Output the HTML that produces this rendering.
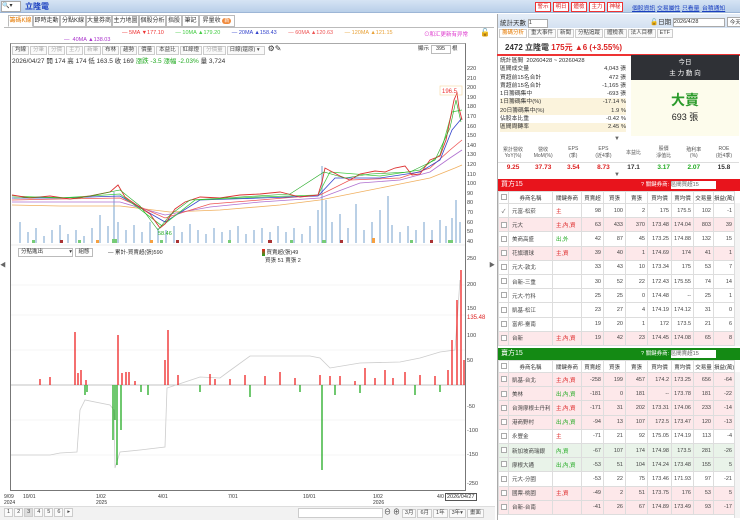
<!DOCTYPE html>
<html><head><meta charset="utf-8">
<style>
*{margin:0;padding:0;box-sizing:border-box}
body{width:740px;height:520px;overflow:hidden;background:#fff;font-family:"Liberation Sans","Noto Sans CJK TC",sans-serif;font-size:7px;color:#333;position:relative}
.abs{position:absolute}
.top{left:0;top:0;width:740px;height:13px;background:linear-gradient(#d6e4f4,#b9cfe9);border-bottom:1px solid #9db6d6}
.btnr{position:absolute;top:2px;height:10px;width:16px;border:1px solid #e33;background:#fff;color:#d22;font-size:5.5px;line-height:8px;text-align:center;white-space:nowrap;overflow:hidden}
.lnk{position:absolute;top:3px;color:#1a3fc0;text-decoration:underline;font-size:5.8px;white-space:nowrap}
.tab{position:absolute;top:15px;height:12px;border:1px solid #bbb;background:#fff;font-size:6px;line-height:10px;text-align:center;color:#333;white-space:nowrap;overflow:hidden}
.tb{display:inline-block;border:1px solid #ccc;height:9px;line-height:7px;padding:0 2px;font-size:5.5px;margin-right:1px;color:#444;background:#fafafa}
.yl{position:absolute;left:467px;font-size:5.5px;color:#444}
table{border-collapse:collapse;table-layout:fixed}
.tt td{border:1px solid #ddd;font-size:5.5px;height:14.2px;text-align:right;padding-right:2px;color:#444;white-space:nowrap;overflow:hidden}
.tt td:nth-child(2),.tt td:nth-child(3){text-align:left;padding-left:3px}
.tt td:nth-child(1){text-align:center;padding:0}
.tt tr.h td{height:12px;text-align:center;padding:0;background:#fff;color:#333}
.pk td{background:#fde8ea}
.gr td{background:#e9f3e9}
.r{color:#d22!important}.g{color:#2a2!important}
.cb{display:inline-block;width:6px;height:6px;border:1px solid #aaa;background:#fff;vertical-align:middle}
</style></head><body>

<div class="abs top"></div>
<div class="abs" style="left:1px;top:1px;width:20px;height:11px;background:#fff;border:1px solid #aaa;font-size:6px;line-height:9px">🔍▾</div>
<div class="abs" style="left:25px;top:1px;font-size:8px;font-weight:bold;color:#1a3fc0">立隆電</div>
<div class="btnr" style="left:535px">警示</div>
<div class="btnr" style="left:553px">明日</div>
<div class="btnr" style="left:571px">體檢</div>
<div class="btnr" style="left:589px">主力</div>
<div class="btnr" style="left:607px">神秘</div>
<div class="lnk" style="left:632px">個股資訊</div>
<div class="lnk" style="left:657px">交易屬性</div>
<div class="lnk" style="left:682px">只看量</div>
<div class="lnk" style="left:702px">台積通知</div>

<!-- left tabs -->
<div class="tab" style="left:8px;width:25px;color:#e67a00;border-bottom-color:#fff">籌碼K線</div>
<div class="tab" style="left:33px;width:27px">即時走動</div>
<div class="tab" style="left:60px;width:26px">分點K線</div>
<div class="tab" style="left:86px;width:26px">大量券商</div>
<div class="tab" style="left:112px;width:27px">主力地圖</div>
<div class="tab" style="left:139px;width:27px">個股分析</div>
<div class="tab" style="left:166px;width:16px">指股</div>
<div class="tab" style="left:182px;width:17px">筆記</div>
<div class="tab" style="left:199px;width:36px">昇量收 <span style="background:#f08a3c;color:#fff;border-radius:4px;padding:0 2px;font-size:5px">新</span></div>
<div class="abs" style="left:4px;top:27px;width:490px;height:1px;background:#bbb"></div>

<div class="abs" style="left:122px;top:30px;font-size:5.5px;white-space:nowrap">
<span style="color:#e33">— </span><span style="color:#e33">5MA ▼177.10</span>
<span style="color:#4c4;margin-left:10px">— </span><span style="color:#4c4">10MA ▲179.20</span>
<span style="color:#34c;margin-left:10px">— </span><span style="color:#34c">20MA ▲158.43</span>
<span style="color:#e55;margin-left:10px">— </span><span style="color:#e55">60MA ▲120.63</span>
<span style="color:#e9a33a;margin-left:10px">— 120MA ▲121.15</span></div>
<div class="abs" style="left:64px;top:37px;font-size:5.5px;color:#a3c">— &nbsp;40MA ▲138.03</div>
<div class="abs" style="left:424px;top:30px;font-size:5.5px;color:#d3c">⊙和汇更新有异常</div>
<div class="abs" style="left:480px;top:28px;font-size:8px">🔓</div>

<!-- chart frame -->
<div class="abs" style="left:10px;top:43px;width:456px;height:448px;border:1px solid #777;border-top-color:#aaa"></div>
<div class="abs" style="left:12px;top:44px;white-space:nowrap">
<span class="tb">均線</span><span class="tb" style="color:#aaa">分筆</span><span class="tb" style="color:#aaa">分價</span><span class="tb" style="color:#aaa">主力</span><span class="tb" style="color:#aaa">新筆</span><span class="tb">布林</span><span class="tb">趨勢</span><span class="tb">價量</span><span class="tb">本益比</span><span class="tb">紅綠燈</span><span class="tb" style="color:#aaa">分價量</span><span class="tb" style="width:38px">日線(還原) ▾</span>
<span style="font-size:8px">⚙✎</span></div>
<div class="abs" style="left:418px;top:44px;font-size:5.5px">顯示 <span style="display:inline-block;border:1px solid #bbb;width:20px;height:9px;text-align:center">395</span> 根</div>
<div class="abs" style="left:12px;top:55px;font-size:6.5px;white-space:nowrap">2026/04/27 開 174 高 174 低 163.5 收 169 <span class="g">漲跌 -3.5 漲幅 -2.03%</span> 量 3,724</div>

<div class="yl" style="top:66px">220</div><div class="yl" style="top:76px">210</div><div class="yl" style="top:85px">200</div><div class="yl" style="top:95px">190</div><div class="yl" style="top:104px">180</div><div class="yl" style="top:114px">170</div><div class="yl" style="top:124px">160</div><div class="yl" style="top:133px">150</div><div class="yl" style="top:143px">140</div><div class="yl" style="top:152px">130</div><div class="yl" style="top:162px">120</div><div class="yl" style="top:172px">110</div><div class="yl" style="top:181px">100</div><div class="yl" style="top:191px">90</div><div class="yl" style="top:200px">80</div><div class="yl" style="top:210px">70</div><div class="yl" style="top:220px">60</div><div class="yl" style="top:229px">50</div><div class="yl" style="top:239px">40</div>

<svg class="abs" style="left:0;top:0" width="495" height="520">
<g stroke="#a9c4e0" stroke-width="1.6">
<path d="M20 243V222M28 243V232M36 243V228M44 243V236M52 243V230M60 243V225M68 243V234M76 243V230M84 243V236M92 243V228M100 243V215M108 243V226M114 243V192M118 243V222M126 243V230M134 243V225M142 243V232M150 243V222M158 243V228M166 243V230M174 243V226M182 243V232M190 243V224M198 243V230M206 243V234M214 243V228M222 243V232M230 243V230M238 243V226M246 243V234M254 243V230M262 243V228M270 243V232M278 243V226M286 243V232M294 243V228M302 243V234M310 243V226M318 243V210M322 243V166M326 243V200M332 243V222M340 243V214M348 243V228M356 243V204M364 243V230M372 243V222M380 243V210M388 243V196M392 243V225M400 243V232M408 243V226M416 243V230M424 243V222M432 243V230M440 243V220M446 243V226M452 243V218M456 243V200M460 243V222"/></g>
<polyline fill="none" stroke="#f0b060" stroke-width="0.8" points="12,205 60,206 120,206 170,212 220,210 280,205 320,200 360,192 400,184 430,178 455,168 462,165"/>
<polyline fill="none" stroke="#b070d0" stroke-width="0.8" points="12,202 60,202 120,202 165,215 210,207 260,202 320,198 360,183 400,180 430,172 450,158 462,150"/>
<polyline fill="none" stroke="#e55" stroke-width="0.8" points="12,200 60,199 120,198 165,218 210,204 260,200 320,195 350,180 400,178 430,168 450,150 462,140"/>
<polyline fill="none" stroke="#34c" stroke-width="0.8" points="12,198 60,198 120,196 165,222 200,200 260,198 318,196 335,178 380,178 420,172 440,160 452,130 462,118"/>
<polyline fill="none" stroke="#4c4" stroke-width="0.8" points="12,196 60,198 120,194 162,226 195,200 260,197 318,195 330,172 380,176 420,170 440,155 452,112 462,110"/>
<polyline fill="none" stroke="#d33" stroke-width="0.9" points="12,195 30,198 50,196 70,199 90,196 110,192 118,185 125,197 135,204 150,214 160,228 165,224 175,209 185,202 200,197 220,198 240,195 260,194 280,192 300,197 318,195 322,182 325,168 340,176 350,180 360,174 375,171 385,172 395,168 405,166 412,175 420,174 430,160 440,156 446,140 450,120 454,100 457,93 459,108 462,120"/>
<polyline fill="none" stroke="#2a2" stroke-width="0.6" points="14,198 40,197 80,198 120,190 140,206 158,230 170,215 190,200 240,197 290,194 324,172 345,178 370,174 410,172 435,160 450,128 456,100 461,122"/>
<text x="442" y="93" font-size="6" fill="#e33">196.5</text>
<rect x="440" y="86" width="22" height="9" fill="none" stroke="#f3d7a0" stroke-width="0.6"/>
<text x="158" y="235" font-size="5.5" fill="#2a2">58.46</text>
<g fill="#7c7">
<rect x="32" y="240" width="3" height="3"/><rect x="78" y="240" width="3" height="3"/><rect x="112" y="239" width="5" height="4"/><rect x="160" y="240" width="3" height="3"/><rect x="228" y="240" width="3" height="3"/><rect x="290" y="240" width="3" height="3"/><rect x="322" y="240" width="4" height="3"/><rect x="410" y="240" width="3" height="3"/><rect x="448" y="240" width="5" height="3"/></g>
<g fill="#a33"><rect x="60" y="240" width="3" height="3"/><rect x="176" y="240" width="3" height="3"/><rect x="268" y="240" width="4" height="3"/><rect x="340" y="240" width="3" height="3"/><rect x="430" y="240" width="3" height="3"/></g>
<g fill="#f6a040"><rect x="96" y="240" width="3" height="3"/><rect x="150" y="240" width="3" height="3"/><rect x="372" y="238" width="3" height="5"/></g>
<line x1="11" y1="245" x2="465" y2="245" stroke="#ddd" stroke-width="0.6"/>
<g stroke="#eee" stroke-width="0.6"><line x1="11" y1="285" x2="465" y2="285"/><line x1="11" y1="315" x2="465" y2="315"/><line x1="11" y1="350" x2="465" y2="350"/><line x1="11" y1="420" x2="465" y2="420"/><line x1="11" y1="455" x2="465" y2="455"/></g>
<line x1="11" y1="385" x2="465" y2="385" stroke="#888" stroke-width="0.6"/>
<polyline fill="none" stroke="#ccc" stroke-width="0.8" points="11,455 50,455 60,453 77,452 80,410 85,400 110,405 114,410 115,468 120,452 140,450 165,447 167,388 200,377 220,378 228,372 250,356 310,356 320,358 330,368 360,363 400,362 420,358 440,352 455,350 460,280"/>
<g stroke="#e22" stroke-width="1.3"><path d="M40 385V379M50 385V377M75 385V332M78 385V373M81 385V370M86 385V380M118 385V335M122 385V373M126 385V372M129 385V372M135 385V381M165 385V360M168 385V330M178 385V375M210 385V374M215 385V379M230 385V379M245 385V375M265 385V376M280 385V372M295 385V378M320 385V375M330 385V376M340 385V376M355 385V381M365 385V368M375 385V378M385 385V370M393 385V378M405 385V372M420 385V375M435 385V376M448 385V370M452 385V340M457 385V300M461 385V270M464 385V360"/></g>
<g stroke="#2a2" stroke-width="1.3"><path d="M85 385V395M87 385V392M113 385V440M115 385V420M117 385V465M121 385V430M141 385V392M148 385V395M200 385V392M250 385V397M300 385V392M322 385V470M335 385V395M360 385V393M415 385V395M440 385V392"/></g>
</svg>
<div class="abs" style="left:18px;top:248px;width:55px;height:9px;border:1px solid #bbb;font-size:5.5px;line-height:7px;padding-left:2px">分點進出 <span style="float:right">▾</span></div>
<div class="abs" style="left:75px;top:248px;width:18px;height:9px;border:1px solid #bbb;font-size:5.5px;line-height:7px;text-align:center">組態</div>
<div class="abs" style="left:108px;top:248px;font-size:5.5px">— 累計-買賣超(張)590</div>
<div class="abs" style="left:262px;top:248px;font-size:5.5px"><span style="display:inline-block;width:3px;height:7px;background:linear-gradient(#e22,#2a2);vertical-align:middle"></span> 買賣超(張)49<br>&nbsp;&nbsp;買張 51 賣張 2</div>
<div class="yl" style="top:256px">250</div><div class="yl" style="top:282px">200</div><div class="yl" style="top:306px">150</div><div class="yl" style="top:315px;color:#d22;font-size:6px">135.48</div><div class="yl" style="top:333px">100</div><div class="yl" style="top:358px">50</div><div class="yl" style="top:404px">-50</div><div class="yl" style="top:428px">-100</div><div class="yl" style="top:452px">-150</div><div class="yl" style="top:481px">-250</div>
<div class="abs" style="left:0;top:260px;font-size:6px;color:#666">◀</div>
<div class="abs" style="left:489px;top:260px;font-size:6px;color:#666">▶</div>

<div class="abs" style="left:4px;top:494px;font-size:5px;line-height:6px">9/09<br>2024</div>
<div class="abs" style="left:23px;top:494px;font-size:5px">10/01</div>
<div class="abs" style="left:96px;top:494px;font-size:5px;line-height:6px">1/02<br>2025</div>
<div class="abs" style="left:158px;top:494px;font-size:5px">4/01</div>
<div class="abs" style="left:228px;top:494px;font-size:5px">7/01</div>
<div class="abs" style="left:303px;top:494px;font-size:5px">10/01</div>
<div class="abs" style="left:373px;top:494px;font-size:5px;line-height:6px">1/02<br>2026</div>
<div class="abs" style="left:437px;top:494px;font-size:5px">4/0</div>
<div class="abs" style="left:445px;top:493px;font-size:5.5px;border:1px solid #555;background:#fff;padding:0 1px">2026/04/27</div>

<div class="abs" style="left:0;top:506px;width:495px;height:14px;background:#f2f2f2;border-top:1px solid #ddd"></div>
<div class="abs" style="left:4px;top:508px;font-size:5.5px;white-space:nowrap"><span class="tb">1</span><span class="tb">2</span><span class="tb" style="background:#ddd">3</span><span class="tb">4</span><span class="tb">5</span><span class="tb">6</span><span class="tb">▸</span></div>
<div class="abs" style="left:298px;top:508px;width:85px;height:10px;border:1px solid #ccc;background:#fff"></div>
<div class="abs" style="left:384px;top:507px;font-size:7px;white-space:nowrap">⊖ ⊕ <span class="tb">3月</span><span class="tb">6月</span><span class="tb">1年</span><span class="tb">3年▾</span><span class="tb">畫面</span></div>

<!-- right panel -->
<div class="abs" style="left:497px;top:14px;width:243px;height:506px;border-left:1px solid #aaa"></div>
<div class="abs" style="left:498px;top:14px;width:242px;height:14px;background:linear-gradient(#e6eef8,#d4e1f1)"></div>
<div class="abs" style="left:500px;top:17px;font-size:6.5px">統計天數 <span style="display:inline-block;width:20px;height:9px;border:1px solid #aaa;background:#fff;font-size:5.5px;vertical-align:middle">1</span></div>
<div class="abs" style="left:650px;top:16px;font-size:6.5px;white-space:nowrap">🔓日期 <span style="display:inline-block;width:52px;height:9px;border:1px solid #aaa;background:#fff;font-size:5.5px;vertical-align:middle">2026/4/28</span> <span style="display:inline-block;border:1px solid #aaa;background:#fff;font-size:5.5px;padding:0 2px">今天</span></div>
<div class="abs" style="left:499px;top:29px;font-size:6px;white-space:nowrap">
<span class="tb" style="color:#e67a00;background:#fff">籌碼分析</span><span class="tb">重大事件</span><span class="tb">新聞</span><span class="tb">分點追蹤</span><span class="tb">體檢表</span><span class="tb">法人目標</span><span class="tb">ETF</span></div>
<div class="abs" style="left:505px;top:42px;font-size:8px;font-weight:bold;white-space:nowrap">2472 立隆電 <span style="color:#d22">175元 ▲6 (+3.55%)</span></div>
<div class="abs" style="left:497px;top:54px;width:243px;height:1.5px;background:#e33"></div>

<div class="abs" style="left:500px;top:57px;width:126px;font-size:5.8px;line-height:8.3px">
<div>統計區間 &nbsp;20260428 ~ 20260428</div>
<div>區間成交量<span style="float:right">4,043 張</span></div>
<div>買超前15名合計<span style="float:right">472 張</span></div>
<div>賣超前15名合計<span style="float:right">-1,165 張</span></div>
<div>1日籌碼集中<span style="float:right">-693 張</span></div>
<div style="background:#fbf3dc">1日籌碼集中(%)<span style="float:right">-17.14 %</span></div>
<div style="background:#fbf3dc">20日籌碼集中(%)<span style="float:right">1.9 %</span></div>
<div>佔股本比重<span style="float:right">-0.42 %</span></div>
<div style="background:#fbf3dc">區間周轉率<span style="float:right">2.45 %</span></div>
</div>
<div class="abs" style="left:631px;top:55px;width:108px;height:25px;background:#2f3136;color:#fff;text-align:center;font-size:6.5px;line-height:11px;padding-top:2px">今日<br>主 力 動 向</div>
<div class="abs" style="left:631px;top:80px;width:108px;height:56px;background:#fdfcec;text-align:center">
<div style="color:#2a9a2a;font-size:14px;font-weight:bold;margin-top:10px">大賣</div>
<div style="font-size:9px;color:#222">693 張</div></div>
<div class="abs" style="left:614px;top:136px;font-size:6px;color:#666">▼</div>

<table class="abs" style="left:498px;top:143px;width:241px;font-size:5px;text-align:center">
<tr style="height:19px;color:#555;border-bottom:1px solid #ddd"><td>累計營收<br>YoY(%)</td><td>營收<br>MoM(%)</td><td>EPS<br>(季)</td><td>EPS<br>(近4季)</td><td>本益比</td><td>股價<br>淨值比</td><td>殖利率<br>(%)</td><td>ROE<br>(近4季)</td></tr>
<tr style="height:11px;font-size:6.5px;font-weight:bold"><td class="r">9.25</td><td class="r">37.73</td><td class="r">3.54</td><td class="r">8.73</td><td>17.1</td><td class="g">3.17</td><td class="g">2.07</td><td>15.8</td></tr></table>
<div class="abs" style="left:614px;top:172px;font-size:6px;color:#666">▼</div>

<div class="abs" style="left:498px;top:179px;width:242px;height:12px;background:#e8141c;color:#fff;font-size:7px;line-height:12px;padding-left:3px">買方15<span style="position:absolute;left:143px;font-size:5.5px;white-space:nowrap">? 關鍵券商: <span style="display:inline-block;width:45px;height:8px;background:#fff;color:#666;vertical-align:middle;line-height:8px">區間買超15</span></span></div>
<table class="abs tt" style="left:498px;top:191px;width:236px">
<colgroup><col style="width:10px"><col style="width:44px"><col style="width:29px"><col style="width:22px"><col style="width:22px"><col style="width:22px"><col style="width:24px"><col style="width:22px"><col style="width:20px"><col style="width:21px"></colgroup>
<tr class="h"><td><span class="cb"></span></td><td>券商名稱</td><td>關鍵券商</td><td>買賣超</td><td>買張</td><td>賣張</td><td>買均價</td><td>賣均價</td><td>交易量</td><td>損益(萬)</td></tr>
<tr><td>✓</td><td>元富-松菸</td><td class="r">主</td><td>98</td><td>100</td><td>2</td><td>175</td><td>175.5</td><td>102</td><td>-1</td></tr>
<tr class="pk"><td><span class="cb"></span></td><td>元大</td><td class="r">主,內,資</td><td>63</td><td>433</td><td>370</td><td>173.48</td><td>174.04</td><td>803</td><td>39</td></tr>
<tr><td><span class="cb"></span></td><td>美商高盛</td><td class="g">出,外</td><td>42</td><td>87</td><td>45</td><td>173.25</td><td>174.88</td><td>132</td><td>15</td></tr>
<tr class="pk"><td><span class="cb"></span></td><td>花旗環球</td><td class="r">主,資</td><td>39</td><td>40</td><td>1</td><td>174.69</td><td>174</td><td>41</td><td>1</td></tr>
<tr><td><span class="cb"></span></td><td>元大-敦北</td><td></td><td>33</td><td>43</td><td>10</td><td>173.34</td><td>175</td><td>53</td><td>7</td></tr>
<tr><td><span class="cb"></span></td><td>台新-三重</td><td></td><td>30</td><td>52</td><td>22</td><td>172.43</td><td>175.55</td><td>74</td><td>14</td></tr>
<tr><td><span class="cb"></span></td><td>元大-竹科</td><td></td><td>25</td><td>25</td><td>0</td><td>174.48</td><td>--</td><td>25</td><td>1</td></tr>
<tr><td><span class="cb"></span></td><td>凱基-松江</td><td></td><td>23</td><td>27</td><td>4</td><td>174.19</td><td>174.12</td><td>31</td><td>0</td></tr>
<tr><td><span class="cb"></span></td><td>富邦-臺南</td><td></td><td>19</td><td>20</td><td>1</td><td>172</td><td>173.5</td><td>21</td><td>6</td></tr>
<tr class="pk"><td><span class="cb"></span></td><td>台新</td><td class="r">主,內,資</td><td>19</td><td>42</td><td>23</td><td>174.45</td><td>174.08</td><td>65</td><td>8</td></tr>
</table>
<div class="abs" style="left:734px;top:203px;width:6px;height:143px;background:#f4f4f4;border-left:1px solid #ddd"></div>

<div class="abs" style="left:498px;top:348px;width:242px;height:12px;background:#148a14;color:#fff;font-size:7px;line-height:12px;padding-left:3px">賣方15<span style="position:absolute;left:143px;font-size:5.5px;white-space:nowrap">? 關鍵券商: <span style="display:inline-block;width:45px;height:8px;background:#fff;color:#666;vertical-align:middle;line-height:8px">區間賣超15</span></span></div>
<table class="abs tt" style="left:498px;top:360px;width:236px">
<colgroup><col style="width:10px"><col style="width:44px"><col style="width:29px"><col style="width:22px"><col style="width:22px"><col style="width:22px"><col style="width:24px"><col style="width:22px"><col style="width:20px"><col style="width:21px"></colgroup>
<tr class="h"><td><span class="cb"></span></td><td>券商名稱</td><td>關鍵券商</td><td>買賣超</td><td>買張</td><td>賣張</td><td>買均價</td><td>賣均價</td><td>交易量</td><td>損益(萬)</td></tr>
<tr class="pk"><td><span class="cb"></span></td><td>凱基-台北</td><td class="r">主,內,資</td><td>-258</td><td>199</td><td>457</td><td>174.2</td><td>173.25</td><td>656</td><td>-64</td></tr>
<tr class="pk"><td><span class="cb"></span></td><td>美林</td><td class="g">出,內,資</td><td>-181</td><td>0</td><td>181</td><td>--</td><td>173.78</td><td>181</td><td>-22</td></tr>
<tr class="pk"><td><span class="cb"></span></td><td>台灣摩根士丹利</td><td class="r">主,內,資</td><td>-171</td><td>31</td><td>202</td><td>173.31</td><td>174.06</td><td>233</td><td>-14</td></tr>
<tr class="pk"><td><span class="cb"></span></td><td>港商野村</td><td class="g">出,內,資</td><td>-94</td><td>13</td><td>107</td><td>172.5</td><td>173.47</td><td>120</td><td>-13</td></tr>
<tr><td><span class="cb"></span></td><td>永豐金</td><td class="r">主</td><td>-71</td><td>21</td><td>92</td><td>175.05</td><td>174.19</td><td>113</td><td>-4</td></tr>
<tr class="gr"><td><span class="cb"></span></td><td>新加坡商瑞銀</td><td class="g">內,資</td><td>-67</td><td>107</td><td>174</td><td>174.98</td><td>173.5</td><td>281</td><td>-26</td></tr>
<tr class="gr"><td><span class="cb"></span></td><td>摩根大通</td><td class="g">出,內,資</td><td>-53</td><td>51</td><td>104</td><td>174.24</td><td>173.48</td><td>155</td><td>5</td></tr>
<tr><td><span class="cb"></span></td><td>元大-分園</td><td></td><td>-53</td><td>22</td><td>75</td><td>173.46</td><td>171.93</td><td>97</td><td>-21</td></tr>
<tr class="pk"><td><span class="cb"></span></td><td>國票-桃園</td><td class="r">主,資</td><td>-49</td><td>2</td><td>51</td><td>173.75</td><td>176</td><td>53</td><td>5</td></tr>
<tr class="pk"><td><span class="cb"></span></td><td>台新-台南</td><td></td><td>-41</td><td>26</td><td>67</td><td>174.89</td><td>173.49</td><td>93</td><td>-17</td></tr>
</table>
<div class="abs" style="left:734px;top:372px;width:6px;height:146px;background:#f4f4f4;border-left:1px solid #ddd"></div>
</body></html>
